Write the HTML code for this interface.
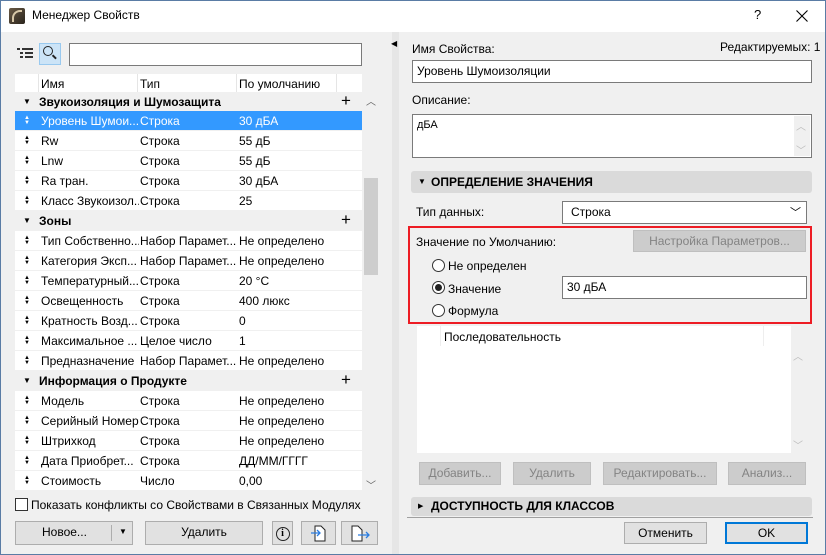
<!DOCTYPE html>
<html><head><meta charset="utf-8"><style>
*{box-sizing:border-box;margin:0;padding:0}
body{width:826px;height:555px;overflow:hidden;background:#f0f0f0;font-family:"Liberation Sans","DejaVu Sans",sans-serif;font-size:12px;color:#000;position:relative}
.a{position:absolute}
.win{position:absolute;left:0;top:0;width:826px;height:555px;border:1px solid #5a7ca5;pointer-events:none}
.tb{left:0;top:0;width:826px;height:32px;background:#fff}
.row{position:absolute;left:15px;width:347px;height:20px;background:#fff;border-bottom:1px solid #f0f0f0;white-space:nowrap}
.row span{position:absolute;top:3px}
.g{background:#f0f0f0;font-weight:bold}
.sel{background:#3399ff;color:#fff}
.c1{left:26px;width:98px;overflow:hidden}.c2{left:125px;width:98px;overflow:hidden}.c3{left:224px}
.ar{left:9px;font-size:6px;top:5px!important;line-height:5px;font-weight:bold}
.btn{position:absolute;background:#e1e1e1;border:1px solid #adadad;text-align:center;line-height:21px}
.dis{background:#cccccc;border-color:#bfbfbf;color:#838383}
.inp{position:absolute;background:#fff;border:1px solid #7a7a7a;padding-left:4px}
.sec{position:absolute;left:411px;width:401px;background:#dadada;border-radius:3px;font-weight:bold;padding-left:20px}
.rad{position:absolute;width:13px;height:13px;border:1px solid #333;border-radius:50%;background:#fff}
</style></head><body>
<div class="a tb"></div>
<div class="a" style="left:9px;top:8px;width:16px;height:16px;background:linear-gradient(135deg,#6a5a45,#2a241c);border-radius:2px"></div>
<div class="a" style="left:12px;top:10px;width:10px;height:12px;border-left:2px solid #d8c8a8;border-top:2px solid #d8c8a8;border-radius:8px 0 0 0"></div>
<div class="a" style="left:32px;top:8px;font-size:12px">Менеджер Свойств</div>
<div class="a" style="left:754px;top:7px;font-size:13px">?</div>
<svg class="a" style="left:796px;top:10px" width="12" height="12"><path d="M0.5 0.5L11.5 11.5M11.5 0.5L0.5 11.5" stroke="#000" stroke-width="1.1"/></svg>

<!-- left toolbar -->
<div class="a" style="left:17px;top:47px;width:17px;height:14px">
<div class="a" style="left:0;top:1px;width:3px;height:2px;background:#333"></div><div class="a" style="left:5px;top:1px;width:11px;height:2px;background:#333"></div>
<div class="a" style="left:3px;top:5px;width:3px;height:2px;background:#333"></div><div class="a" style="left:8px;top:5px;width:8px;height:2px;background:#333"></div>
<div class="a" style="left:3px;top:9px;width:3px;height:2px;background:#333"></div><div class="a" style="left:8px;top:9px;width:8px;height:2px;background:#333"></div>
</div>
<div class="a" style="left:39px;top:43px;width:22px;height:22px;background:#cce4f7;border:1px solid #99c9ef"></div>
<div class="a" style="left:43px;top:46px;width:10px;height:10px;border:1.5px solid #222;border-radius:50%"></div>
<div class="a" style="left:52px;top:56px;width:5px;height:1.5px;background:#222;transform:rotate(45deg)"></div>
<div class="inp" style="left:69px;top:43px;width:293px;height:23px"></div>

<!-- header -->
<div class="a" style="left:15px;top:74px;width:347px;height:19px;background:#fff;border-bottom:1px solid #f0f0f0"></div>
<div class="a" style="left:38px;top:74px;width:1px;height:19px;background:#e5e5e5"></div>
<div class="a" style="left:137px;top:74px;width:1px;height:19px;background:#e5e5e5"></div>
<div class="a" style="left:236px;top:74px;width:1px;height:19px;background:#e5e5e5"></div>
<div class="a" style="left:336px;top:74px;width:1px;height:19px;background:#e5e5e5"></div>
<div class="a" style="left:41px;top:77px">Имя</div>
<div class="a" style="left:140px;top:77px">Тип</div>
<div class="a" style="left:239px;top:77px">По умолчанию</div>

<div class="row g" style="top:92px"><span style="left:8px;font-size:8px;top:5px">▼</span><span style="left:24px">Звукоизоляция и Шумозащита</span><span style="left:326px;font-size:17px;top:-1px;font-weight:normal">+</span></div>
<div class="row sel" style="top:111px"><span class="ar">▲<br>▼</span><span class="c1">Уровень Шумои...</span><span class="c2">Строка</span><span class="c3">30 дБА</span></div>
<div class="row" style="top:131px"><span class="ar">▲<br>▼</span><span class="c1">Rw</span><span class="c2">Строка</span><span class="c3">55 дБ</span></div>
<div class="row" style="top:151px"><span class="ar">▲<br>▼</span><span class="c1">Lnw</span><span class="c2">Строка</span><span class="c3">55 дБ</span></div>
<div class="row" style="top:171px"><span class="ar">▲<br>▼</span><span class="c1">Ra тран.</span><span class="c2">Строка</span><span class="c3">30 дБА</span></div>
<div class="row" style="top:191px"><span class="ar">▲<br>▼</span><span class="c1">Класс Звукоизол...</span><span class="c2">Строка</span><span class="c3">25</span></div>
<div class="row g" style="top:211px"><span style="left:8px;font-size:8px;top:5px">▼</span><span style="left:24px">Зоны</span><span style="left:326px;font-size:17px;top:-1px;font-weight:normal">+</span></div>
<div class="row" style="top:231px"><span class="ar">▲<br>▼</span><span class="c1">Тип Собственно...</span><span class="c2">Набор Парамет...</span><span class="c3">Не определено</span></div>
<div class="row" style="top:251px"><span class="ar">▲<br>▼</span><span class="c1">Категория Эксп...</span><span class="c2">Набор Парамет...</span><span class="c3">Не определено</span></div>
<div class="row" style="top:271px"><span class="ar">▲<br>▼</span><span class="c1">Температурный...</span><span class="c2">Строка</span><span class="c3">20 °C</span></div>
<div class="row" style="top:291px"><span class="ar">▲<br>▼</span><span class="c1">Освещенность</span><span class="c2">Строка</span><span class="c3">400 люкс</span></div>
<div class="row" style="top:311px"><span class="ar">▲<br>▼</span><span class="c1">Кратность Возд...</span><span class="c2">Строка</span><span class="c3">0</span></div>
<div class="row" style="top:331px"><span class="ar">▲<br>▼</span><span class="c1">Максимальное ...</span><span class="c2">Целое число</span><span class="c3">1</span></div>
<div class="row" style="top:351px"><span class="ar">▲<br>▼</span><span class="c1">Предназначение</span><span class="c2">Набор Парамет...</span><span class="c3">Не определено</span></div>
<div class="row g" style="top:371px"><span style="left:8px;font-size:8px;top:5px">▼</span><span style="left:24px">Информация о Продукте</span><span style="left:326px;font-size:17px;top:-1px;font-weight:normal">+</span></div>
<div class="row" style="top:391px"><span class="ar">▲<br>▼</span><span class="c1">Модель</span><span class="c2">Строка</span><span class="c3">Не определено</span></div>
<div class="row" style="top:411px"><span class="ar">▲<br>▼</span><span class="c1">Серийный Номер</span><span class="c2">Строка</span><span class="c3">Не определено</span></div>
<div class="row" style="top:431px"><span class="ar">▲<br>▼</span><span class="c1">Штрихкод</span><span class="c2">Строка</span><span class="c3">Не определено</span></div>
<div class="row" style="top:451px"><span class="ar">▲<br>▼</span><span class="c1">Дата Приобрет...</span><span class="c2">Строка</span><span class="c3">ДД/ММ/ГГГГ</span></div>
<div class="row" style="top:471px"><span class="ar">▲<br>▼</span><span class="c1">Стоимость</span><span class="c2">Число</span><span class="c3">0,00</span></div>
<!-- scrollbar -->
<div class="a" style="left:362px;top:92px;width:16px;height:399px;background:#f0f0f0"></div>
<div class="a" style="left:364px;top:178px;width:14px;height:97px;background:#cdcdcd"></div>
<div class="a" style="left:366px;top:93px;font-size:10px;color:#606060">︿</div>
<div class="a" style="left:366px;top:477px;font-size:10px;color:#606060">﹀</div>

<div class="a" style="left:15px;top:498px;width:13px;height:13px;border:1px solid #333;background:#fff"></div>
<div class="a" style="left:31px;top:498px">Показать конфликты со Свойствами в Связанных Модулях</div>
<div class="btn" style="left:15px;top:521px;width:118px;height:24px">
<span style="position:absolute;left:26px">Новое...</span><span style="position:absolute;left:95px;top:3px;width:1px;height:16px;background:#adadad"></span><span style="position:absolute;left:103px;top:-1px;font-size:8px">▼</span></div>
<div class="btn" style="left:145px;top:521px;width:118px;height:24px">Удалить</div>
<div class="btn" style="left:272px;top:521px;width:21px;height:24px"><span style="display:inline-block;margin-top:4px;width:14px;height:14px;border:1px solid #222;border-radius:50%;font-size:10px;line-height:12px;font-weight:bold;font-family:'Liberation Serif',serif">i</span></div>
<div class="btn" style="left:301px;top:521px;width:35px;height:24px"><svg width="20" height="20" style="margin-top:1px" viewBox="0 0 20 20"><path d="M6 3h6l4 4v11H6z" fill="#fff" stroke="#222"/><path d="M2 10h9M8 7l3 3-3 3" stroke="#2a7ce0" fill="none" stroke-width="1.3"/></svg></div>
<div class="btn" style="left:341px;top:521px;width:37px;height:24px"><svg width="22" height="20" style="margin-top:1px" viewBox="0 0 22 20"><path d="M3 3h6l4 4v11H3z" fill="#fff" stroke="#222"/><path d="M9 12h11M17 9l3 3-3 3" stroke="#2a7ce0" fill="none" stroke-width="1.3"/></svg></div>

<!-- splitter -->
<div class="a" style="left:392px;top:32px;width:7px;height:522px;background:#e6e6e6"></div>
<div class="a" style="left:391px;top:39px;font-size:8px">◀</div>

<!-- right -->
<div class="a" style="left:412px;top:42px">Имя Свойства:</div>
<div class="a" style="left:720px;top:40px">Редактируемых: 1</div>
<div class="inp" style="left:412px;top:60px;width:400px;height:23px;line-height:21px">Уровень Шумоизоляции</div>
<div class="a" style="left:412px;top:93px">Описание:</div>
<div class="inp" style="left:412px;top:114px;width:400px;height:44px;padding-top:4px;font-size:11px">дБА</div>
<div class="a" style="left:794px;top:116px;width:16px;height:40px;background:#f0f0f0"></div>
<div class="a" style="left:796px;top:118px;font-size:10px;color:#bbb">︿</div>
<div class="a" style="left:796px;top:142px;font-size:10px;color:#bbb">﹀</div>

<div class="sec" style="top:171px;height:22px;line-height:22px"><span style="position:absolute;left:7px;font-size:8px">▼</span>ОПРЕДЕЛЕНИЕ ЗНАЧЕНИЯ</div>
<div class="a" style="left:416px;top:205px">Тип данных:</div>
<div class="inp" style="left:562px;top:201px;width:245px;height:23px;line-height:21px;padding-left:8px">Строка<span style="position:absolute;right:5px;top:1px;font-size:11px">﹀</span></div>

<div class="a" style="left:408px;top:226px;width:404px;height:98px;border:2px solid #ed1c24"></div>
<div class="a" style="left:416px;top:235px">Значение по Умолчанию:</div>
<div class="btn dis" style="left:633px;top:230px;width:173px;height:22px;line-height:20px">Настройка Параметров...</div>
<div class="rad" style="left:432px;top:259px"></div><div class="a" style="left:448px;top:259px">Не определен</div>
<div class="rad" style="left:432px;top:281px"></div><div class="a" style="left:435px;top:284px;width:7px;height:7px;border-radius:50%;background:#222"></div><div class="a" style="left:448px;top:282px">Значение</div>
<div class="inp" style="left:562px;top:276px;width:245px;height:23px;line-height:21px">30 дБА</div>
<div class="rad" style="left:432px;top:304px"></div><div class="a" style="left:448px;top:304px">Формула</div>

<div class="a" style="left:417px;top:326px;width:374px;height:127px;background:#fff"></div>
<div class="a" style="left:440px;top:326px;width:1px;height:20px;background:#eee"></div>
<div class="a" style="left:763px;top:326px;width:1px;height:20px;background:#eee"></div>
<div class="a" style="left:444px;top:330px">Последовательность</div>
<div class="a" style="left:791px;top:346px;width:16px;height:107px;background:#f0f0f0"></div>
<div class="a" style="left:793px;top:348px;font-size:10px;color:#bbb">︿</div>
<div class="a" style="left:793px;top:437px;font-size:10px;color:#bbb">﹀</div>

<div class="btn dis" style="left:419px;top:462px;width:82px;height:23px">Добавить...</div>
<div class="btn dis" style="left:513px;top:462px;width:78px;height:23px">Удалить</div>
<div class="btn dis" style="left:603px;top:462px;width:114px;height:23px">Редактировать...</div>
<div class="btn dis" style="left:728px;top:462px;width:78px;height:23px">Анализ...</div>

<div class="sec" style="top:497px;height:19px;line-height:19px;border-radius:3px"><span style="position:absolute;left:7px;font-size:7px">▶</span>ДОСТУПНОСТЬ ДЛЯ КЛАССОВ</div>
<div class="a" style="left:407px;top:517px;width:406px;height:1px;background:#a0a0a0"></div>
<div class="btn" style="left:624px;top:522px;width:83px;height:22px;line-height:20px">Отменить</div>
<div class="btn" style="left:725px;top:522px;width:83px;height:22px;line-height:18px;border:2px solid #0078d7">OK</div>

<div class="win"></div>
</body></html>
